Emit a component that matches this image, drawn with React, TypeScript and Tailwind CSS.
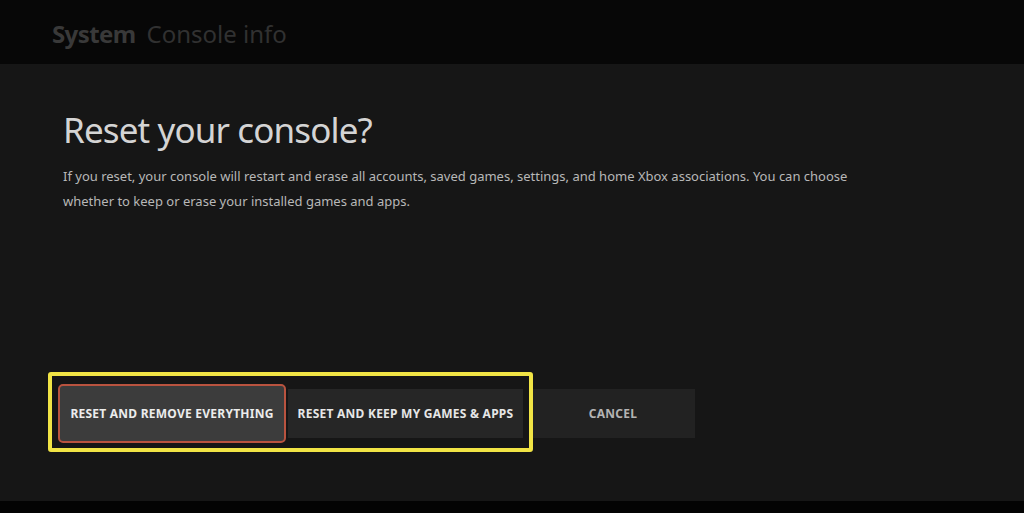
import React from 'react';

const font = { fontFamily: '"Noto Sans", "Open Sans", sans-serif' };

export default function App() {
  return (
    <div className="w-[1024px] h-[513px] flex flex-col bg-[#161616] overflow-hidden" style={font}>
      {/* top header */}
      <div className="h-[64px] bg-[#070707] flex items-center pl-[52px] pt-[4px] shrink-0">
        <span className="text-[24px] font-bold text-[#393939] tracking-tight">System</span>
        <span className="text-[24px] text-[#313131] ml-[11px]">Console info</span>
      </div>

      {/* dialog body */}
      <div className="flex-1 flex flex-col pl-[63px] pt-[44px]">
        <h1 className="text-[35px] leading-[44px] text-[#d4d4d4] tracking-tight">Reset your console?</h1>
        <p className="mt-[12px] text-[13px] leading-[25px] text-[#b8b8b8] w-[820px]">
          If you reset, your console will restart and erase all accounts, saved games, settings, and home Xbox associations. You can choose whether to keep or erase your installed games and apps.
        </p>

        <div className="relative mt-[170px] flex items-center">
          <button className="-ml-[5px] w-[228px] h-[59px] rounded-[5px] border-2 border-[#b9533f] bg-[#3c3c3c] text-[12px] font-bold text-[#ececec] tracking-[0.02em] uppercase">
            Reset and remove everything
          </button>
          <button className="ml-[2px] w-[235px] h-[49px] bg-[#262626] text-[12px] font-bold text-[#e6e6e6] tracking-[0.02em] uppercase">
            Reset and keep my games &amp; apps
          </button>
          <button className="ml-[8px] w-[164px] h-[49px] bg-[#222222] text-[12px] font-bold text-[#b4b4b4] tracking-[0.02em] uppercase">
            Cancel
          </button>

          {/* highlight annotation */}
          <div className="absolute left-[-15px] top-[-12px] w-[485px] h-[80px] rounded-[3px] border-4 border-[#f1e445] pointer-events-none" />
        </div>
      </div>

      {/* bottom bar */}
      <div className="h-[12px] bg-[#030303] shrink-0" />
    </div>
  );
}
